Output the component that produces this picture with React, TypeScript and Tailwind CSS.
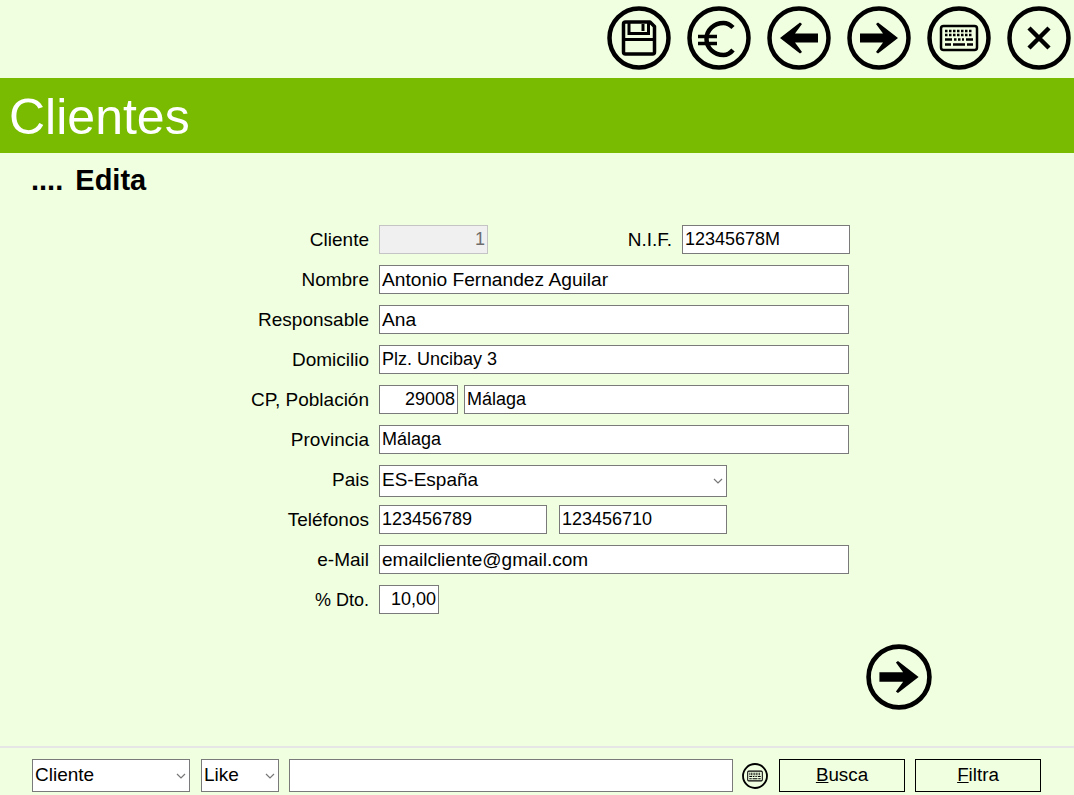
import React from 'react';

const font = { fontFamily: '"Liberation Sans", Arial, sans-serif' };

function Circle({ children, className = 'w-16 h-16' }: { children: React.ReactNode; className?: string }) {
  return (
    <svg viewBox="0 0 64 64" className={className} fill="none" stroke="#000">
      <circle cx="32" cy="32" r="29.5" strokeWidth="4.5" fill="#f0ffe0" />
      {children}
    </svg>
  );
}

const SaveIcon = () => (
  <Circle>
    <path d="M16.5 18Q16.5 16 18.5 16H43L47.5 20.5V46Q47.5 48 45.5 48H18.5Q16.5 48 16.5 46Z" strokeWidth="3.5" strokeLinejoin="round" />
    <path d="M22 16V27.5H41.5V16" strokeWidth="3" />
    <path d="M36 18V25" strokeWidth="3" />
    <path d="M17 33.5H47" strokeWidth="3" />
  </Circle>
);

const EuroIcon = () => (
  <Circle>
    <path d="M46 21.5C43 18.5 40 17 36.5 17C27 17 19.5 24 19.5 33C19.5 42 27 49 36.5 49C40 49 43.5 47 46 44" strokeWidth="4.5" />
    <path d="M11 30.5H30M11 37.5H30" strokeWidth="3.5" />
  </Circle>
);

const LeftIcon = () => (
  <Circle>
    <path d="M51 27.5H28L35 18L33 16.5L13 32L33 47.5L35 46L28 36.5H51Z" fill="#000" stroke="none" />
  </Circle>
);

const RightIcon = ({ className }: { className?: string }) => (
  <Circle className={className}>
    <path d="M13 27.5H36L29 18L31 16.5L51 32L31 47.5L29 46L36 36.5H13Z" fill="#000" stroke="none" />
  </Circle>
);

const KeyboardIcon = ({ className }: { className?: string }) => (
  <Circle className={className}>
    <rect x="14" y="20" width="36" height="24" rx="2.5" strokeWidth="2.5" />
    <path d="M18 25H46M18 29H46" strokeWidth="2.5" strokeDasharray="2.5 1.5" />
    <path d="M18 33.5H25M39 33.5H46M18 38.5H24M26 38.5H38M40 38.5H46" strokeWidth="2.5" />
    <path d="M27 33.5H37" strokeWidth="2.5" strokeDasharray="2.5 1.5" />
  </Circle>
);

const CloseIcon = () => (
  <Circle>
    <path d="M22 22L42 42M42 22L22 42" strokeWidth="4.5" />
  </Circle>
);

function Field({ value, className = '', right = false, disabled = false, size = 'text-[18px]' }: { value: string; className?: string; right?: boolean; disabled?: boolean; size?: string }) {
  const tone = disabled ? 'border-[#c4c4c4] bg-[#f0f0f0] text-[#6d6d6d]' : 'border-[#7a7a7a] bg-white text-black';
  return (
    <input
      readOnly
      value={value}
      className={`h-[29px] border px-[2px] outline-none ${size} ${tone} ${right ? 'text-right' : ''} ${className}`}
    />
  );
}

function Row({ label, size = 'text-[19px]', children }: { label: string; size?: string; children: React.ReactNode }) {
  return (
    <div className="flex h-[29px] items-center">
      <label className={`w-[369px] pt-[2px] text-right text-black ${size}`}>{label}</label>
      <div className="ml-[10px] flex items-center">{children}</div>
    </div>
  );
}

function Dropdown({ value, className }: { value: string; className: string }) {
  return (
    <div className={`relative ${className}`}>
      <select
        value={value}
        onChange={() => {}}
        className="h-full w-full appearance-none rounded-none border border-[#7a7a7a] bg-white px-[2px] text-[19px] text-black outline-none"
      >
        <option>{value}</option>
      </select>
      <svg viewBox="0 0 10 6" className="pointer-events-none absolute right-[4px] top-1/2 h-[6px] w-[10px] -translate-y-1/2" fill="none" stroke="#777" strokeWidth="1.2">
        <path d="M1 1L5 5L9 1" />
      </svg>
    </div>
  );
}

export default function App() {
  return (
    <div className="flex h-[795px] w-[1074px] flex-col overflow-hidden bg-[#f0ffe0]" style={font}>
      {/* Toolbar */}
      <div className="flex h-[78px] items-center justify-end gap-4 pr-[3px] pb-[2px]">
        <SaveIcon />
        <EuroIcon />
        <LeftIcon />
        <RightIcon className="w-16 h-16" />
        <KeyboardIcon className="w-16 h-16" />
        <CloseIcon />
      </div>

      {/* Banner */}
      <div className="flex h-[75px] items-center bg-[#78bb00] pl-[9px] pt-[2px]">
        <h1 className="text-[50px] font-normal leading-none text-white">Clientes</h1>
      </div>

      <h2 className="mt-[11px] pl-[31px] text-[29px] font-bold leading-[32px] text-black [word-spacing:4px]">.... Edita</h2>

      {/* Form */}
      <div className="mt-[29px] flex flex-col gap-[11px]">
        <Row label="Cliente">
          <Field value="1" right disabled className="w-[109px]" />
          <span className="ml-[138px] w-[46px] pt-[2px] text-right text-[19px] whitespace-nowrap text-black">N.I.F.</span>
          <Field value="12345678M" className="ml-[10px] w-[168px]" />
        </Row>
        <Row label="Nombre"><Field value="Antonio Fernandez Aguilar" size="text-[19.2px]" className="w-[470px]" /></Row>
        <Row label="Responsable"><Field value="Ana" size="text-[19.2px]" className="w-[470px]" /></Row>
        <Row label="Domicilio"><Field value="Plz. Uncibay 3" className="w-[470px]" /></Row>
        <Row label="CP, Población">
          <Field value="29008" right className="w-[79px]" />
          <Field value="Málaga" className="ml-[6px] w-[385px]" />
        </Row>
        <Row label="Provincia"><Field value="Málaga" className="w-[470px]" /></Row>
        <Row label="Pais">
          <Dropdown value="ES-España" className="mt-[2px] h-[32px] w-[348px]" />
        </Row>
        <Row label="Teléfonos">
          <Field value="123456789" className="w-[168px]" />
          <Field value="123456710" className="ml-[12px] w-[168px]" />
        </Row>
        <Row label="e-Mail"><Field value="emailcliente@gmail.com" size="text-[19px]" className="w-[470px]" /></Row>
        <Row label="% Dto." size="text-[18px]"><Field value="10,00" right className="w-[60px]" /></Row>
      </div>

      <div className="mt-[30px] flex justify-end pr-[142px]">
        <RightIcon className="w-[66px] h-[66px]" />
      </div>

      {/* Search bar */}
      <div className="mt-auto flex h-[49px] items-start border-t-2 border-[#e6e6e6] pl-[32px] pt-[11px]">
        <Dropdown value="Cliente" className="h-[33px] w-[158px]" />
        <Dropdown value="Like" className="ml-[11px] h-[33px] w-[78px]" />
        <Field value="" className="ml-[10px] !h-[33px] w-[444px]" />
        <div className="ml-[9px] flex h-[33px] items-center">
          <KeyboardIcon className="w-[26px] h-[26px]" />
        </div>
        <button className="ml-[11px] h-[33px] w-[126px] border border-black bg-[#f0ffe0] text-[18.8px] text-black"><span className="underline">B</span>usca</button>
        <button className="ml-[10px] h-[33px] w-[126px] border border-black bg-[#f0ffe0] text-[18.8px] text-black"><span className="underline">F</span>iltra</button>
      </div>
    </div>
  );
}
